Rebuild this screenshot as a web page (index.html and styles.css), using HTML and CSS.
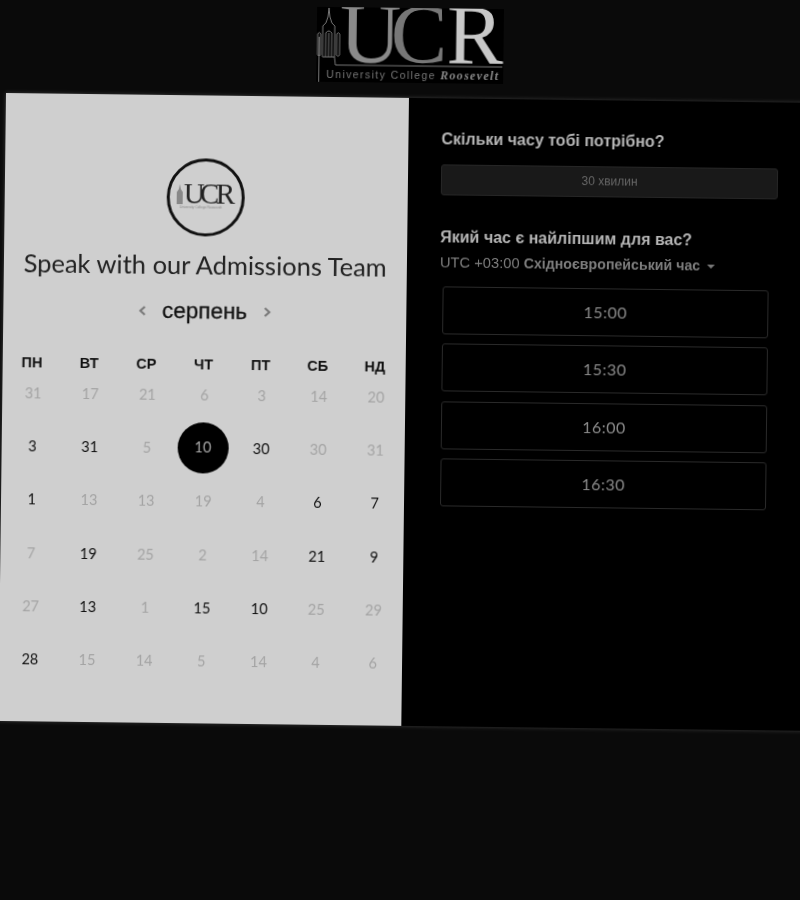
FILE: index.html
```html
<!DOCTYPE html>
<html lang="uk">
<head>
<meta charset="utf-8">
<title>Speak with our Admissions Team</title>
<link rel="stylesheet" href="styles.css">
</head>
<body>
<div class="frame">
  <header class="top">
    <svg class="logo" viewBox="0 0 187 75" aria-label="UCR">
      <rect width="187" height="75" fill="#000"/>
      <path d="M6 50V19l3-3 2-6 1-9 1 9 2 6 3 3v31M6 50h12M9 50V26q3-4 6 0v24M12 26v24" fill="none" stroke="#777" stroke-width="1"/>
      <path d="M1 48V27q1.500-3 3 0v21q-1.500 3-3 0zM20 48V27q1.500-3 3 0v21q-1.500 3-3 0zM2.500 30v46M18 50l1 8h167" fill="none" stroke="#777" stroke-width="1"/>
      <text class="l-big" x="23" y="55" fill="#8a8a8a">U</text>
      <text class="l-big" x="74" y="55" fill="#777">C</text>
      <text class="l-big" x="130" y="55" fill="#c8c8c8">R</text>
      <text class="l-sub" x="10" y="71" fill="#777">University College</text>
      <text class="l-ro" x="124" y="71" fill="#888">Roosevelt</text>
    </svg>
  </header>
  <main class="sheet">
    <section class="card">
      <div class="badge">
        <svg class="badge-logo" viewBox="0 0 62 30" aria-label="UCR">
          <path d="M2 22V10l2-3 1-5 1 5 2 3v12z" fill="#888"/>
          <text class="b-big" x="9" y="21" fill="#222">U</text>
          <text class="b-big" x="25" y="21" fill="#222">C</text>
          <text class="b-big" x="41" y="21" fill="#222">R</text>
          <text class="b-sub" x="5" y="26" fill="#888">University College Roosevelt</text>
        </svg>
      </div>
      <h1 class="title">Speak with our Admissions Team</h1>
      <div class="month">
        <svg class="chev" viewBox="0 0 10 12"><path d="M7.500 2 3 6l4.500 4" fill="none" stroke="#777" stroke-width="2"/></svg>
        <span class="month-name">серпень</span>
        <svg class="chev" viewBox="0 0 10 12"><path d="M2.500 2 7 6l-4.500 4" fill="none" stroke="#777" stroke-width="2"/></svg>
      </div>
      <div class="week">
        <span>ПН</span><span>ВТ</span><span>СР</span><span>ЧТ</span><span>ПТ</span><span>СБ</span><span>НД</span>
      </div>
      <div class="days">
        <span class="day">31</span><span class="day">17</span><span class="day">21</span><span class="day">6</span><span class="day">3</span><span class="day">14</span><span class="day">20</span>
        <span class="day on">3</span><span class="day on">31</span><span class="day">5</span><span class="day sel"><b>10</b></span><span class="day on">30</span><span class="day">30</span><span class="day">31</span>
        <span class="day on">1</span><span class="day">13</span><span class="day">13</span><span class="day">19</span><span class="day">4</span><span class="day on">6</span><span class="day on">7</span>
        <span class="day">7</span><span class="day on">19</span><span class="day">25</span><span class="day">2</span><span class="day">14</span><span class="day on">21</span><span class="day on">9</span>
        <span class="day">27</span><span class="day on">13</span><span class="day">1</span><span class="day on">15</span><span class="day on">10</span><span class="day">25</span><span class="day">29</span>
        <span class="day on">28</span><span class="day">15</span><span class="day">14</span><span class="day">5</span><span class="day">14</span><span class="day">4</span><span class="day">6</span>
      </div>
    </section>
    <section class="panel">
      <h2 class="q q-first">Скільки часу тобі потрібно?</h2>
      <div class="duration">30 хвилин</div>
      <h2 class="q q-second">Який час є найліпшим для вас?</h2>
      <div class="zone">UTC +03:00 <strong>Східноєвропейський час</strong><i class="caret"></i></div>
      <div class="slots">
        <div class="slot">15:00</div>
        <div class="slot">15:30</div>
        <div class="slot">16:00</div>
        <div class="slot">16:30</div>
      </div>
    </section>
  </main>
</div>
</body>
</html>
```
FILE: styles.css
```css
html, body {
  margin: 0;
  height: 900px;
  overflow: hidden;
  background: #0a0a0a;
}
.frame {
  width: 813px;
  padding-left: 6px;
  box-sizing: border-box;
  transform: rotate(0.7deg);
  transform-origin: 6px 93px;
  filter: grayscale(1) blur(0.35px);
}
.top {
  height: 93px;
  padding-top: 3px;
  box-sizing: border-box;
  display: flex;
  justify-content: center;
}
.logo {
  width: 187px;
  height: 75px;
  display: block;
}
.l-big { font: 85px "Liberation Serif", serif; }
.l-sub { font: 10.5px "Liberation Sans", sans-serif; letter-spacing: 1.4px; }
.l-ro { font: italic bold 12px "Liberation Serif", serif; letter-spacing: 1.3px; }
.sheet {
  display: flex;
  height: 628px;
  background: #000;
  box-shadow: 0 0 4px #3a3a3a;
}
.card {
  width: 402.5px;
  flex: none;
  background: #cfcfcf;
  box-sizing: border-box;
  padding-top: 63px;
  display: flex;
  flex-direction: column;
  align-items: center;
}
.badge {
  width: 78px;
  height: 78px;
  box-sizing: border-box;
  border: 3px solid #111;
  border-radius: 50%;
  display: flex;
  align-items: center;
  justify-content: center;
}
.badge-logo { width: 62px; height: 30px; display: block; }
.b-big { font: 29px "Liberation Serif", serif; }
.b-sub { font: 3.300px "Liberation Sans", sans-serif; }
.title {
  margin: 12px 0 0;
  font: 400 25.5px/32px Lato, sans-serif;
  color: #222;
  white-space: nowrap;
}
.month {
  margin-top: 16px;
  display: flex;
  align-items: center;
  gap: 15px;
  height: 30px;
}
.chev { width: 10px; height: 12px; display: block; }
.month-name {
  font: 22.5px/30px "Liberation Sans", sans-serif;
  color: #111;
  -webkit-text-stroke: 0.3px #111;
}
.week, .days {
  width: 400px;
  display: grid;
  grid-template-columns: repeat(7, 1fr);
  text-align: center;
}
.week {
  margin-top: 25px;
  margin-right: 1px;
  font: bold 14.5px/26px "Liberation Sans", sans-serif;
  color: #111;
}
.days {
  margin-top: 5px;
  margin-left: 2px;
  grid-auto-rows: 53.2px;
}
.day {
  font: 14.5px/26px Lato, sans-serif;
  color: #a4a4a4;
}
.day.on { color: #111; }
.sel {
  position: relative;
}
.sel b {
  position: absolute;
  left: 2px;
  top: -13px;
  width: 51px;
  height: 51px;
  border-radius: 50%;
  background: #000;
  color: #a8a8a8;
  font-weight: 400;
  line-height: 49px;
}
.panel {
  flex: 1;
  padding: 29px 0 0 33.5px;
  box-sizing: border-box;
  font-family: "Liberation Sans", sans-serif;
}
.q {
  margin: 0;
  font-size: 16px;
  font-weight: 700;
  line-height: 24px;
  color: #b5b5b5;
}
.duration {
  width: 337px;
  height: 31px;
  margin-top: 13px;
  box-sizing: border-box;
  background: #191919;
  border: 1px solid #262626;
  border-radius: 3px;
  color: #666;
  font-size: 12px;
  line-height: 29px;
  text-align: center;
}
.q-second { margin-top: 30px; }
.zone {
  margin-top: 1px;
  color: #7d7d7d;
  font-size: 14.7px;
  line-height: 24px;
}
.zone strong { color: #7d7d7d; font-size: 14.200px; }
.caret {
  display: inline-block;
  margin-left: 7px;
  vertical-align: 2px;
  border: 4px solid transparent;
  border-top-color: #777;
  border-bottom: 0;
}
.slots {
  margin: 12px 0 0 3px;
  display: flex;
  flex-direction: column;
  gap: 9.300px;
}
.slot {
  width: 326px;
  height: 48px;
  box-sizing: border-box;
  border: 1px solid #2a2a2a;
  border-radius: 3px;
  color: #8a8a8a;
  font: 16px/46px Lato, sans-serif;
  letter-spacing: 0.5px;
  text-align: center;
}
```
